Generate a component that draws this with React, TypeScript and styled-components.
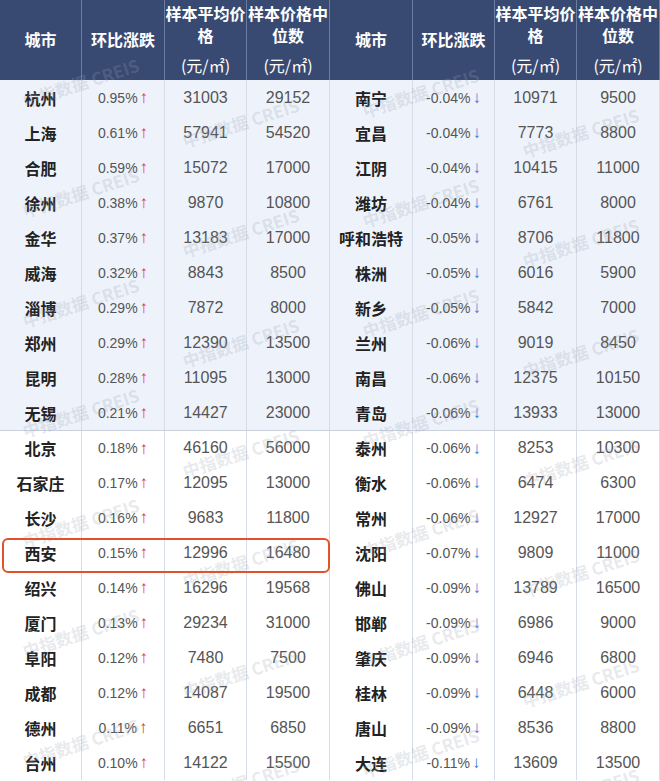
import React from "react";
import styled, { createGlobalStyle } from "styled-components";

const G = createGlobalStyle`
  body{margin:0;background:#fff;font-family:"Noto Sans CJK SC","Noto Sans",sans-serif;}
`;
const Wrap = styled.div`position:relative;width:660px;height:781px;overflow:hidden;`;
const Table = styled.div`display:grid;grid-template-columns:82px 83px 82px 83px 83px 82px 82px 83px;`;
const Head = styled.div`background:#394a72;color:#fff;height:80px;display:flex;flex-direction:column;justify-content:center;align-items:center;font-size:16px;font-weight:600;line-height:22px;text-align:center;border-right:1px solid #6c7ba0;box-sizing:border-box;padding-bottom:2px;`;
const Unit = styled.div`font-weight:400;margin-top:8px;`;
const Cell = styled.div<{ $alt: boolean; $bold?: boolean; $sep?: boolean }>`
  height:35px;display:flex;align-items:center;justify-content:center;
  background:${p => (p.$alt ? "#eef3fb" : "#fff")};
  border-right:1px solid #d6dce8;box-sizing:border-box;
  border-top:${p => (p.$sep ? "1px solid #c9d0dc" : "none")};
  font-size:16px;color:${p => (p.$bold ? "#222" : "#555")};font-weight:${p => (p.$bold ? 700 : 400)};
  font-family:${p => (p.$bold ? '"Noto Sans CJK SC",sans-serif' : '"Liberation Sans","Noto Sans CJK SC",sans-serif')};
`;
const Pct = styled.span`font-size:14px;`;
const Arrow = styled.span<{ $up: boolean }>`color:${p => (p.$up ? "#e0391e" : "#3a7bd5")};font-size:17px;margin-left:2px;font-weight:700;line-height:1;`;
const Box = styled.div`position:absolute;left:2px;top:538px;width:328px;height:35px;border:2.5px solid #e2512a;border-radius:6px;box-sizing:border-box;`;
const Mark = styled.div`position:absolute;color:rgba(150,160,175,0.24);font-size:17px;font-weight:700;transform:rotate(-18deg);white-space:nowrap;font-family:"Noto Sans CJK SC",sans-serif;`;

const L = [
["杭州","0.95%",31003,29152],["上海","0.61%",57941,54520],["合肥","0.59%",15072,17000],["徐州","0.38%",9870,10800],["金华","0.37%",13183,17000],["威海","0.32%",8843,8500],["淄博","0.29%",7872,8000],["郑州","0.29%",12390,13500],["昆明","0.28%",11095,13000],["无锡","0.21%",14427,23000],
["北京","0.18%",46160,56000],["石家庄","0.17%",12095,13000],["长沙","0.16%",9683,11800],["西安","0.15%",12996,16480],["绍兴","0.14%",16296,19568],["厦门","0.13%",29234,31000],["阜阳","0.12%",7480,7500],["成都","0.12%",14087,19500],["德州","0.11%",6651,6850],["台州","0.10%",14122,15500]];
const R = [
["南宁","-0.04%",10971,9500],["宜昌","-0.04%",7773,8800],["江阴","-0.04%",10415,11000],["潍坊","-0.04%",6761,8000],["呼和浩特","-0.05%",8706,11800],["株洲","-0.05%",6016,5900],["新乡","-0.05%",5842,7000],["兰州","-0.06%",9019,8450],["南昌","-0.06%",12375,10150],["青岛","-0.06%",13933,13000],
["泰州","-0.06%",8253,10300],["衡水","-0.06%",6474,6300],["常州","-0.06%",12927,17000],["沈阳","-0.07%",9809,11000],["佛山","-0.09%",13789,16500],["邯郸","-0.09%",6986,9000],["肇庆","-0.09%",6946,6800],["桂林","-0.09%",6448,6000],["唐山","-0.09%",8536,8800],["大连","-0.11%",13609,13500]];

const heads = () => (
  <>
    <Head>城市</Head><Head>环比涨跌</Head>
    <Head>样本平均价<br/>格<Unit>(元/㎡)</Unit></Head>
    <Head>样本价格中<br/>位数<Unit>(元/㎡)</Unit></Head>
  </>
);

export default function App() {
  const marks: [number, number][] = [];
  for (let y = 60; y < 800; y += 110) { marks.push([20, y + 10]); marks.push([180, y + 50]); marks.push([360, y + 20]); marks.push([520, y + 60]); }
  return (
    <Wrap>
      <G />
      <Table>
        {heads()}{heads()}
        {L.map((l, i) => {
          const r = R[i]; const alt = i < 10; const sep = i === 10;
          return (
            <React.Fragment key={i}>
              <Cell $alt={alt} $sep={sep} $bold>{l[0]}</Cell>
              <Cell $alt={alt} $sep={sep}><Pct>{l[1]}</Pct><Arrow $up>↑</Arrow></Cell>
              <Cell $alt={alt} $sep={sep}>{l[2]}</Cell>
              <Cell $alt={alt} $sep={sep}>{l[3]}</Cell>
              <Cell $alt={alt} $sep={sep} $bold>{r[0]}</Cell>
              <Cell $alt={alt} $sep={sep}><Pct>{r[1]}</Pct><Arrow $up={false}>↓</Arrow></Cell>
              <Cell $alt={alt} $sep={sep}>{r[2]}</Cell>
              <Cell $alt={alt} $sep={sep}>{r[3]}</Cell>
            </React.Fragment>
          );
        })}
      </Table>
      {marks.map(([x, y], i) => <Mark key={i} style={{ left: x, top: y }}>中指数据 CREIS</Mark>)}
      <Box />
    </Wrap>
  );
}
